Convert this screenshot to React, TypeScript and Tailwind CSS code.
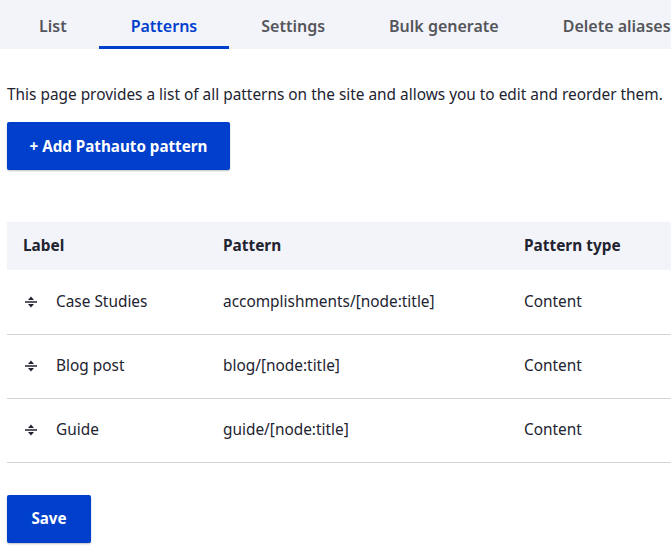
const tabs = ["List", "Patterns", "Settings", "Bulk generate", "Delete aliases"];

const rows = [
  { label: "Case Studies", pattern: "accomplishments/[node:title]", type: "Content" },
  { label: "Blog post", pattern: "blog/[node:title]", type: "Content" },
  { label: "Guide", pattern: "guide/[node:title]", type: "Content" },
];

function DragHandle() {
  return (
    <svg width="14" height="14" viewBox="0 0 14 14" className="shrink-0">
      <path d="M4 5 L7 1.5 L10 5 Z" fill="#222330" />
      <rect x="1" y="6.25" width="12" height="1.5" fill="#222330" />
      <path d="M4 9 L7 12.5 L10 9 Z" fill="#222330" />
    </svg>
  );
}

export default function App() {
  return (
    <div
      className="w-[671px] h-[559px] overflow-hidden bg-white text-[#222330]"
      style={{ fontFamily: '"Noto Sans", "Open Sans", sans-serif' }}
    >
      {/* Tabs */}
      <nav className="flex h-[49px] bg-[#f3f4f9] pl-[7px] whitespace-nowrap">
        {tabs.map((t) => (
          <div
            key={t}
            className={
              t === "Patterns"
                ? "relative flex items-center pt-[3px] px-8 text-[16px] font-semibold text-[#003ecc]"
                : "relative flex items-center pt-[3px] px-8 text-[16px] font-semibold text-[#55565b]"
            }
          >
            {t}
            {t === "Patterns" && (
              <span className="absolute left-0 right-0 bottom-0 h-[3px] bg-[#003ecc]" />
            )}
          </div>
        ))}
      </nav>

      <div className="px-[7px]">
        <p className="mt-[35px] text-[15.4px] leading-[22px] whitespace-nowrap">
          This page provides a list of all patterns on the site and allows you to edit and reorder them.
        </p>

        <button className="mt-[16px] h-[48px] w-[223px] rounded-[2px] bg-[#003ecc] text-white text-[15.2px] font-bold shadow-[0_1px_2px_rgba(0,0,0,0.25)]">
          + Add Pathauto pattern
        </button>

        <table className="mt-[52px] w-[664px] table-fixed text-[15.4px] border-collapse">
          <thead>
            <tr className="h-[48px] bg-[#f3f4f9] text-left">
              <th className="pl-4 w-[216px] font-bold">Label</th>
              <th className="w-[301px] font-bold">Pattern</th>
              <th className="font-bold">Pattern type</th>
            </tr>
          </thead>
          <tbody>
            {rows.map((r) => (
              <tr key={r.label} className="h-[64px] border-b border-[#d3d4d9]">
                <td className="pl-[17px]">
                  <div className="flex items-center gap-[18px]">
                    <DragHandle />
                    <span>{r.label}</span>
                  </div>
                </td>
                <td>{r.pattern}</td>
                <td>{r.type}</td>
              </tr>
            ))}
          </tbody>
        </table>

        <button className="mt-[32px] h-[48px] w-[84px] rounded-[2px] bg-[#003ecc] text-white text-[15.2px] font-bold shadow-[0_1px_2px_rgba(0,0,0,0.25)]">
          Save
        </button>
      </div>
    </div>
  );
}
